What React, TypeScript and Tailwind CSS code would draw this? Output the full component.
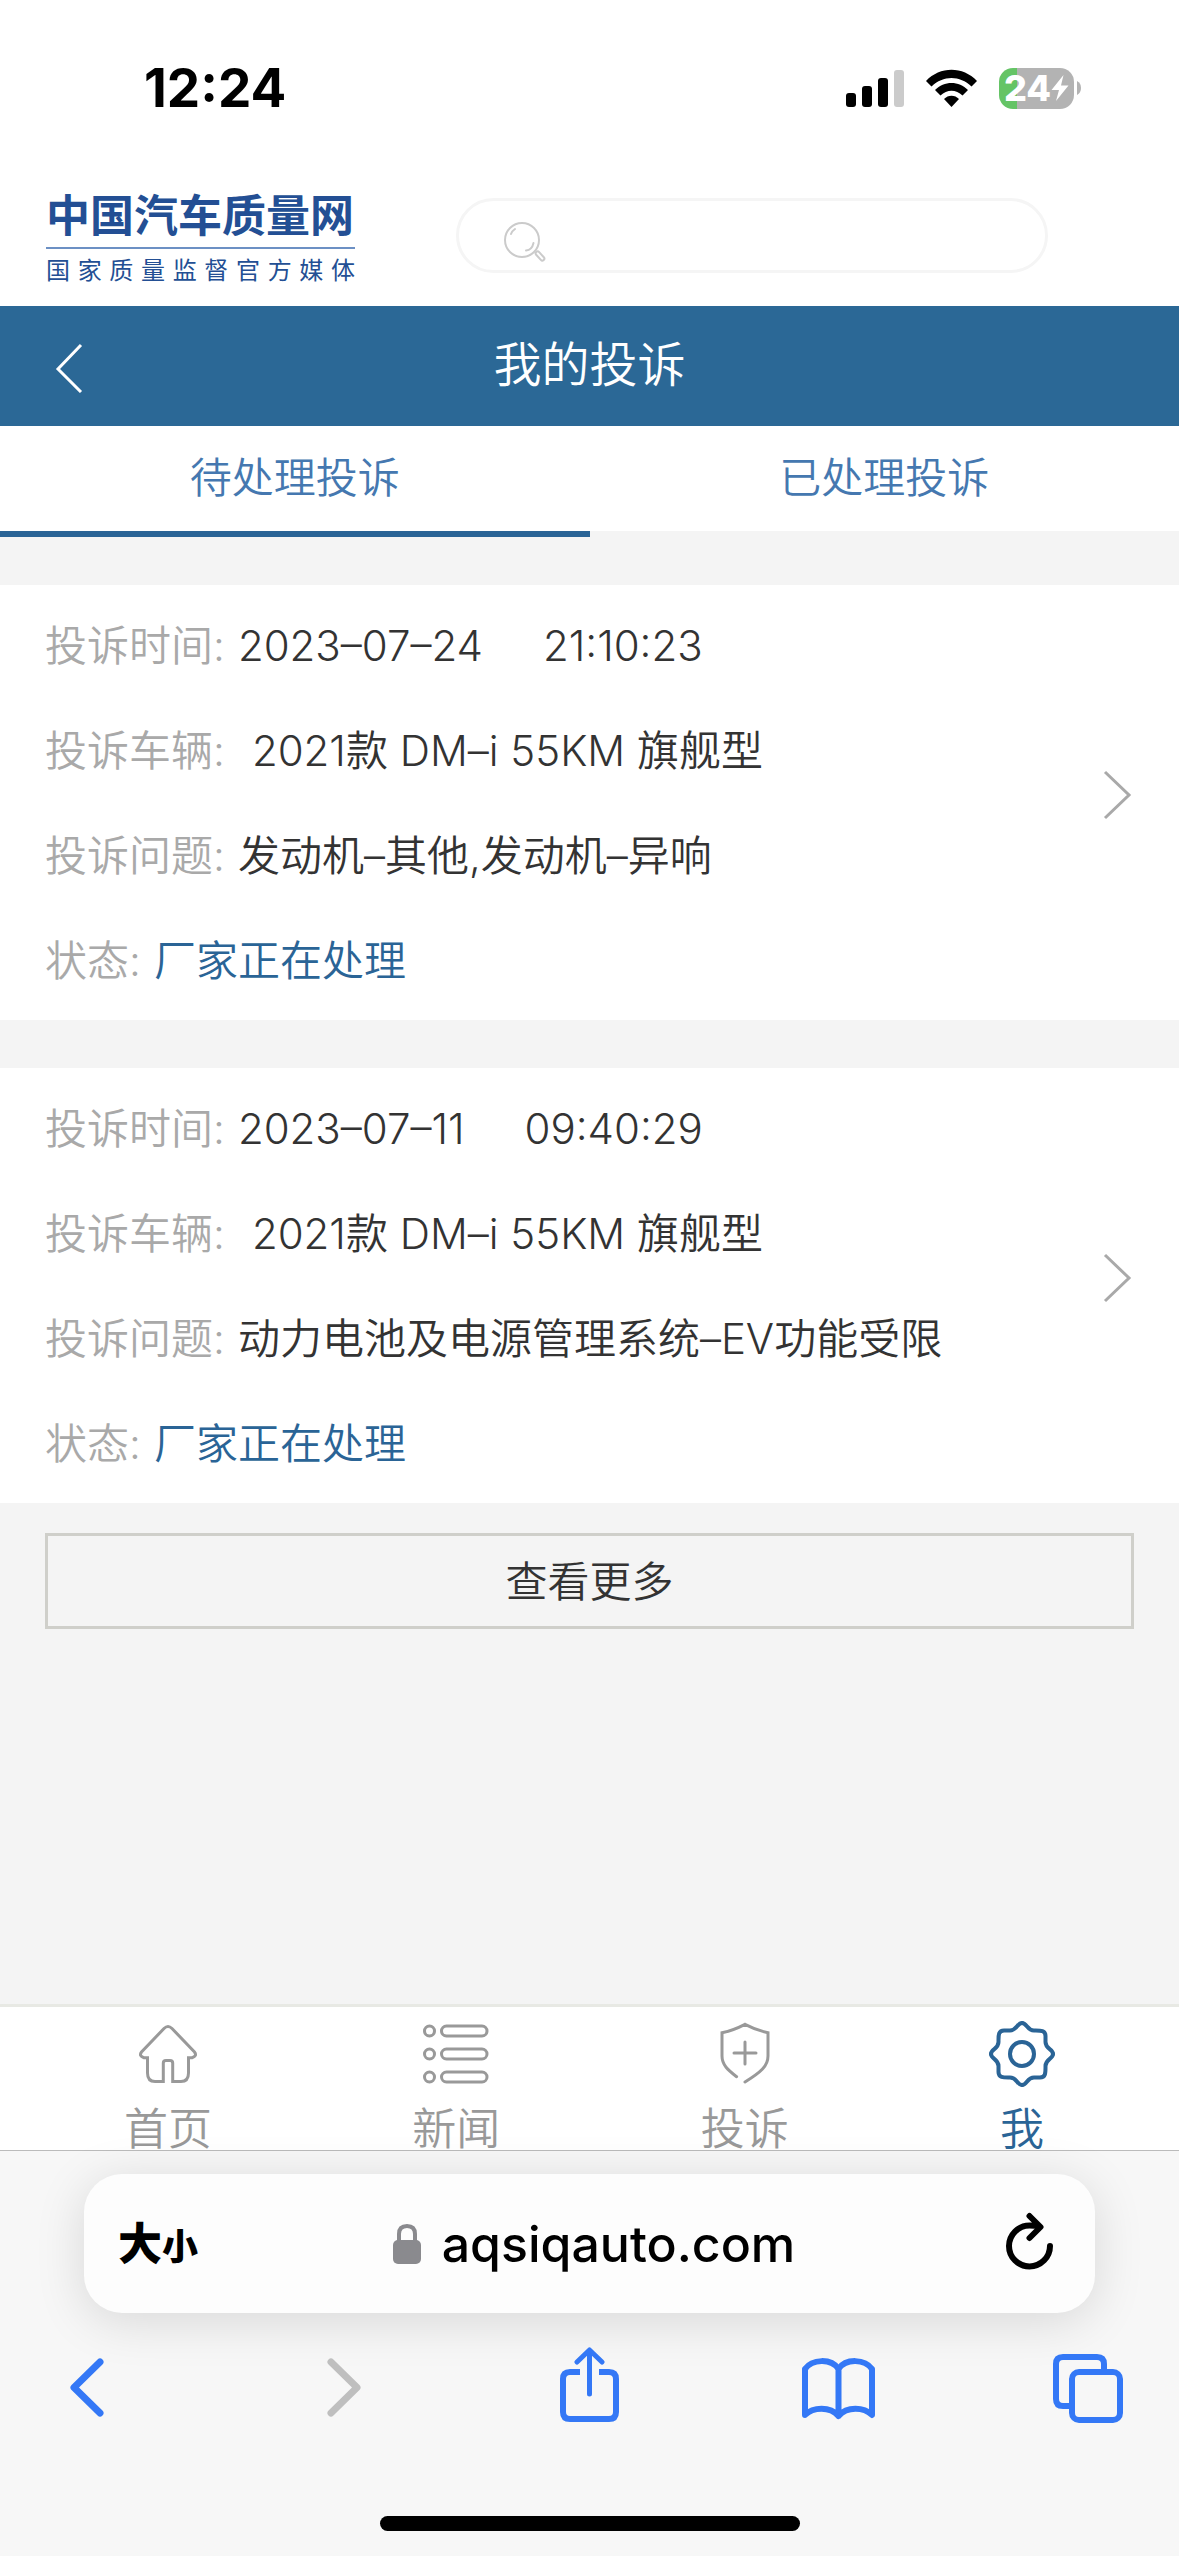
import { useState } from 'react';
import type { ReactNode } from 'react';

const COMPLAINTS = [
  {
    id: 1,
    date: '2023–07–24',
    time: '21:10:23',
    car: '2021款 DM–i 55KM 旗舰型',
    problem: '发动机–其他,发动机–异响',
    status: '厂家正在处理',
  },
  {
    id: 2,
    date: '2023–07–11',
    time: '09:40:29',
    car: '2021款 DM–i 55KM 旗舰型',
    problem: '动力电池及电源管理系统–EV功能受限',
    status: '厂家正在处理',
  },
];

const TABS = ['待处理投诉', '已处理投诉'];

function StatusBar() {
  return (
    <div className="flex h-[174px] items-start justify-between pt-[56px] pr-[98px] pl-[144px]">
      <span className="text-[53px] leading-[64px] font-bold text-black">12:24</span>
      <div className="flex h-[64px] items-center gap-[22px]">
        <svg width="58" height="38" viewBox="0 0 58 38" aria-hidden="true">
          <rect x="0" y="24" width="10" height="14" rx="3" />
          <rect x="16" y="17" width="10" height="21" rx="3" />
          <rect x="32" y="9" width="10" height="29" rx="3" />
          <rect x="48" y="1" width="10" height="37" rx="3" fill="#cbcbcb" />
        </svg>
        <svg width="51" height="38" viewBox="0 0 51 38" aria-hidden="true">
          <path d="M0 12C14-3 37-3 51 12L45.500 17.500C34 6 17 6 5.500 17.500Z" />
          <path d="M9 21C18 11.500 33 11.500 42 21L36.500 26.500C30 20 21 20 14.500 26.500Z" />
          <path d="M18 30C22 25.500 29 25.500 33 30L25.500 38Z" />
        </svg>
        <div className="flex items-center gap-[3px]">
          <div className="flex h-[41px] w-[75px] items-center justify-center rounded-[14px] bg-[linear-gradient(to_right,#65c466_18px,#b3b3b3_18px)] text-white">
            <span className="text-[36px] leading-[40px] font-extrabold">24</span>
            <svg width="18" height="26" viewBox="0 0 18 26" fill="currentColor" aria-hidden="true">
              <path d="M12.500 0 0.500 15H8L5 26 17.500 10.500H10Z" />
            </svg>
          </div>
          <svg width="4" height="14" viewBox="0 0 4 14" fill="#b3b3b3" aria-hidden="true">
            <path d="M0 0Q4 2 4 7T0 14Z" />
          </svg>
        </div>
      </div>
    </div>
  );
}

function SiteHeader() {
  return (
    <header className="flex h-[132px] items-start justify-between pt-[14px] pr-[131px] pl-[46px]">
      <a href="#" className="block w-[309px] text-[#234f94]">
        <span className="block border-b-2 border-[#6c90c4] pb-[3px] text-[44px] leading-[56px] font-bold whitespace-nowrap">
          中国汽车质量网
        </span>
        <span className="block pt-[2px] text-[24px] leading-[40px] whitespace-nowrap [text-align-last:justify]">
          国家质量监督官方媒体
        </span>
      </a>
      <label className="mt-[10px] flex h-[75px] w-[592px] items-center rounded-full border-3 border-[#f5f5f5] pl-[45px]">
        <svg width="44" height="52" viewBox="0 0 44 52" fill="none" stroke="#cbcbcb" strokeWidth="2" strokeLinecap="round" aria-hidden="true">
          <circle cx="18" cy="30" r="17" />
          <path d="M7 24Q8 21 11 19M29.500 33Q28 40 22 40.500" />
          <rect x="-2" y="-5.500" width="4" height="11" rx="2" transform="translate(36 46) rotate(-42)" />
        </svg>
        <input type="search" aria-label="搜索" className="h-full min-w-0 flex-1 bg-transparent px-3 text-[40px] outline-none" />
      </label>
    </header>
  );
}

function Row({ label, color = 'text-[#333333]', children }: { label: string; color?: string; children: ReactNode }) {
  return (
    <div className="flex gap-[13px] leading-[105px]">
      <dt className="text-[#a9a9a9]">{label}:</dt>
      <dd className={color}>{children}</dd>
    </div>
  );
}

function ComplaintCard({ item }: { item: (typeof COMPLAINTS)[number] }) {
  return (
    <a href="#" className="flex items-center justify-between bg-white pt-[8px] pr-[46px] pb-[7px] pl-[45px] text-[42px]">
      <dl>
        <Row label="投诉时间">
          <span className="flex gap-[60px]">
            <span>{item.date}</span>
            <span>{item.time}</span>
          </span>
        </Row>
        <Row label="投诉车辆">
          <span className="pl-[14px]">{item.car}</span>
        </Row>
        <Row label="投诉问题">{item.problem}</Row>
        <Row label="状态" color="text-[#2a6496]">
          {item.status}
        </Row>
      </dl>
      <svg width="30" height="52" viewBox="0 0 30 52" fill="none" stroke="#a9a9a9" strokeWidth="3" className="mb-4" aria-hidden="true">
        <path d="M2 3 26 26 2 49" />
      </svg>
    </a>
  );
}

function NavItem({ label, active, children }: { label: string; active?: boolean; children: ReactNode }) {
  return (
    <a href="#" className={`flex flex-col items-center gap-[21px] ${active ? 'text-[#2a6496]' : 'text-[#999999]'}`}>
      <svg width="66" height="66" viewBox="0 0 66 66" fill="none" stroke="currentColor" strokeWidth="3" strokeLinecap="round" aria-hidden="true">
        {children}
      </svg>
      <span className="text-[44px] leading-[42px]">{label}</span>
    </a>
  );
}

function BottomNav() {
  return (
    <nav className="flex justify-between border-t-3 border-[#e8e9e4] bg-white px-[124px] pt-[14px] font-[350]">
      <NavItem label="首页">
        <path d="M28.300 60.500H20Q12.500 60.500 12.500 52V36.800H9Q3.500 35 6.500 31L29 7.500Q33 3.500 37 7.500L59.500 31Q62.500 35 57 36.800H53.500V52Q53.500 60.500 46 60.500H37.700V42Q37.700 39.500 35 39.500H31Q28.300 39.500 28.300 42Z" />
      </NavItem>
      <NavItem label="新闻">
        {[10, 33, 56].map((y) => (
          <g key={y}>
            <circle cx="6.500" cy={y} r="5" />
            <rect x="18.500" y={y - 5} width="45.500" height="10" rx="5" />
          </g>
        ))}
      </NavItem>
      <NavItem label="投诉">
        <path d="M24.600 55.700C16 49 10 44 10 35V11.700Q21 9.500 33 3.300Q45 9.500 56 11.700V35C56 45 49 51 33 61M33 21V43M22 32H44" />
      </NavItem>
      <NavItem label="我" active>
        {/* each quarter is one straight bump and one square corner bump */}
        {[0, 90, 180, 270].map((deg) => (
          <path
            key={deg}
            d="M33 2C38 2 38 9.500 45 9.500C51 9.500 56.500 9 56.500 15V21C56.500 28 64 28 64 33"
            strokeWidth="4"
            transform={`rotate(${deg} 33 33)`}
          />
        ))}
        <circle cx="33" cy="33" r="12" strokeWidth="4" />
      </NavItem>
    </nav>
  );
}

function ToolButton({ label, color = 'text-[#3478f6]', children }: { label: string; color?: string; children: ReactNode }) {
  return (
    <button type="button" aria-label={label} className={color}>
      <svg width="80" height="80" viewBox="0 0 80 80" fill="none" stroke="currentColor" strokeWidth="6" strokeLinecap="round" strokeLinejoin="round">
        {children}
      </svg>
    </button>
  );
}

function BrowserBar() {
  return (
    <footer className="border-t border-[#bbbbbb] bg-[#f7f7f7] pt-[23px]">
      <div className="mx-[84px] flex h-[139px] items-center justify-between rounded-[38px] bg-[#fdfdfd] pr-[38px] pl-[34px] text-black shadow-[0_8px_50px_rgba(0,0,0,0.13)]">
        <button type="button" aria-label="大小" className="flex w-[90px] items-baseline font-black">
          <span className="text-[44px]">大</span>
          <span className="text-[36px]">小</span>
        </button>
        <div className="flex items-center gap-[20px]">
          <svg width="30" height="42" viewBox="0 0 30 42" aria-hidden="true">
            <rect x="1" y="17" width="28" height="24" rx="5" fill="#8a8a8e" />
            <path d="M7 18V11Q7 3 15 3T23 11V18" fill="none" stroke="#8a8a8e" strokeWidth="4" />
          </svg>
          <span className="text-[50px] leading-[64px] font-medium">aqsiqauto.com</span>
        </div>
        <div className="flex w-[78px] justify-end">
          <button type="button" aria-label="刷新">
            <svg width="56" height="64" viewBox="0 0 56 64" fill="none" stroke="currentColor" strokeWidth="6" strokeLinecap="round" strokeLinejoin="round">
              <path d="M49 34A20.500 20.500 0 1 1 28.500 13.500Q34 13.500 38 14.500M28.500 4 39.500 15 28.500 26" />
            </svg>
          </button>
        </div>
      </div>
      <div className="flex items-center justify-between px-12 pt-[34px]">
        <ToolButton label="后退">
          <path d="M52 15 26 40.500 52 66" strokeWidth="7" />
        </ToolButton>
        <ToolButton label="前进" color="text-[#bfbfbf]">
          <path d="M32 15 58 40.500 32 66" strokeWidth="7" />
        </ToolButton>
        <ToolButton label="分享">
          <path d="M30 25H20Q13 25 13 32V65Q13 72 20 72H59Q66 72 66 65V32Q66 25 59 25H49" strokeLinecap="butt" />
          <path d="M39.500 47V4M27 15 39.500 3 52 15" strokeWidth="5" />
        </ToolButton>
        <ToolButton label="书签">
          <path d="M38.500 22C31 11 12 12 5 22V68C13 60 30 59 38.500 69C47 59 64 60 72 68V22C65 12 46 11 38.500 22V69" />
        </ToolButton>
        <ToolButton label="标签页">
          <path d="M18 59H12Q5 59 5 52V17Q5 10 12 10H46Q53 10 53 17V24" strokeLinecap="butt" />
          <rect x="21" y="25" width="48" height="48" rx="7" />
        </ToolButton>
      </div>
      <div className="flex justify-center pt-[89px] pb-[25px]">
        <div className="h-[15px] w-[420px] rounded-full bg-black" />
      </div>
    </footer>
  );
}

export default function App() {
  const [tab, setTab] = useState(0);

  return (
    <div className="flex min-h-screen flex-col bg-[#f4f4f4] font-['Inter','Noto_Sans_CJK_SC',sans-serif]">
      <div className="bg-white">
        <StatusBar />
        <SiteHeader />
      </div>

      <div className="grid h-[120px] grid-cols-[1fr_auto_1fr] items-center bg-[#2b6896] px-[54px] text-white">
        <button type="button" aria-label="返回" className="justify-self-start">
          <svg width="30" height="54" viewBox="0 0 30 54" fill="none" stroke="currentColor" strokeWidth="3">
            <path d="M27 6 4 30 27 53" />
          </svg>
        </button>
        <h1 className="pb-[3px] text-[48px] leading-[64px] font-[350]">我的投诉</h1>
      </div>

      <div role="tablist" className="grid h-[111px] grid-cols-2 text-[42px] text-[#4578b0]">
        {TABS.map((t, i) => (
          <button
            key={t}
            type="button"
            role="tab"
            aria-selected={tab === i}
            onClick={() => setTab(i)}
            className={`border-b-6 bg-white bg-clip-padding pb-[2px] font-[350] ${tab === i ? 'border-[#2a6496]' : 'border-transparent'}`}
          >
            {t}
          </button>
        ))}
      </div>

      <main className="flex-1 pt-[48px] font-[350]">
        <div className="flex flex-col gap-[48px]">
          {COMPLAINTS.map((c) => (
            <ComplaintCard key={c.id} item={c} />
          ))}
        </div>
        <div className="px-[45px] pt-[30px]">
          <button type="button" className="h-[96px] w-full border-3 border-[#cfcfca] text-[42px] text-[#333333]">
            查看更多
          </button>
        </div>
      </main>

      <BottomNav />
      <BrowserBar />
    </div>
  );
}
